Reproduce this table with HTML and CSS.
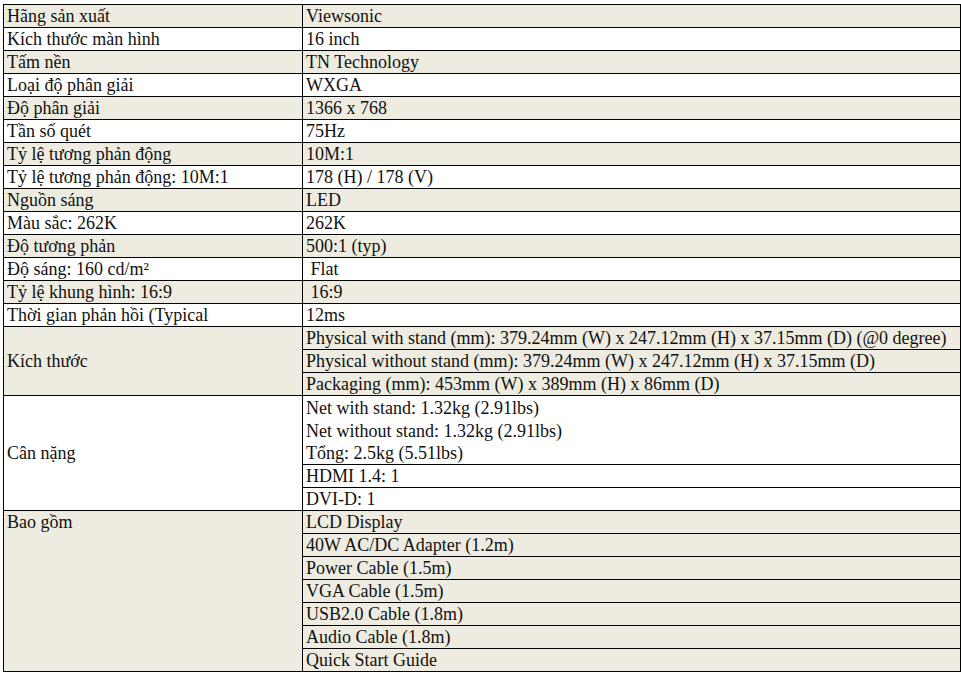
FILE: index.html
```html
<!DOCTYPE html>
<html lang="vi">
<head>
<meta charset="utf-8">
<title>Thông số kỹ thuật</title>
<link rel="stylesheet" href="styles.css">
</head>
<body>
<table class="spec">
<colgroup><col class="c1"><col class="c2"></colgroup>
<tbody>
<tr class="alt"><td>Hãng sản xuất</td><td>Viewsonic</td></tr>
<tr><td>Kích thước màn hình</td><td>16 inch</td></tr>
<tr class="alt"><td>Tấm nền</td><td>TN Technology</td></tr>
<tr><td>Loại độ phân giải</td><td>WXGA</td></tr>
<tr class="alt"><td>Độ phân giải</td><td>1366 x 768</td></tr>
<tr><td>Tần số quét</td><td>75Hz</td></tr>
<tr class="alt"><td>Tỷ lệ tương phản động</td><td>10M:1</td></tr>
<tr><td>Tỷ lệ tương phản động: 10M:1</td><td>178 (H) / 178 (V)</td></tr>
<tr class="alt"><td>Nguồn sáng</td><td>LED</td></tr>
<tr><td>Màu sắc: 262K</td><td>262K</td></tr>
<tr class="alt"><td>Độ tương phản</td><td>500:1 (typ)</td></tr>
<tr><td>Độ sáng: 160 cd/m²</td><td>&nbsp;Flat</td></tr>
<tr class="alt"><td>Tỷ lệ khung hình: 16:9</td><td>&nbsp;16:9</td></tr>
<tr><td>Thời gian phản hồi (Typical</td><td>12ms</td></tr>
<tr class="alt"><td rowspan="3">Kích thước</td><td>Physical with stand (mm): 379.24mm (W) x 247.12mm (H) x 37.15mm (D) (@0 degree)</td></tr>
<tr class="alt"><td>Physical without stand (mm): 379.24mm (W) x 247.12mm (H) x 37.15mm (D)</td></tr>
<tr class="alt"><td>Packaging (mm): 453mm (W) x 389mm (H) x 86mm (D)</td></tr>
<tr><td rowspan="5">Cân nặng</td><td class="nb">Net with stand: 1.32kg (2.91lbs)</td></tr>
<tr><td class="nb">Net without stand: 1.32kg (2.91lbs)</td></tr>
<tr><td>Tổng: 2.5kg (5.51lbs)</td></tr>
<tr><td>HDMI 1.4: 1</td></tr>
<tr><td>DVI-D: 1</td></tr>
<tr class="alt"><td rowspan="7" class="top">Bao gồm</td><td>LCD Display</td></tr>
<tr class="alt"><td>40W AC/DC Adapter (1.2m)</td></tr>
<tr class="alt"><td>Power Cable (1.5m)</td></tr>
<tr class="alt"><td>VGA Cable (1.5m)</td></tr>
<tr class="alt"><td>USB2.0 Cable (1.8m)</td></tr>
<tr class="alt"><td>Audio Cable (1.8m)</td></tr>
<tr class="alt"><td>Quick Start Guide</td></tr>
</tbody>
</table>
</body>
</html>
```
FILE: styles.css
```css
html, body {
  margin: 0;
  padding: 0;
  background: #ffffff;
}
body {
  padding: 4px 0 0 3px;
  font-family: "Liberation Serif", "Times New Roman", serif;
  font-size: 18px;
  color: #111111;
}
.spec {
  border-collapse: collapse;
  width: 957px;
  table-layout: fixed;
}
.c1 { width: 299px; }
.c2 { width: 658px; }
.spec td {
  border: 1px solid #000000;
  height: 22px;
  padding: 0 3px;
  line-height: 22px;
  vertical-align: middle;
  white-space: nowrap;
  overflow: hidden;
}
.spec tr.alt td {
  background: #eeece1;
}
.spec td.nb {
  border-bottom-style: hidden;
  height: 23px;
}
.spec td.top {
  vertical-align: top;
}
```
